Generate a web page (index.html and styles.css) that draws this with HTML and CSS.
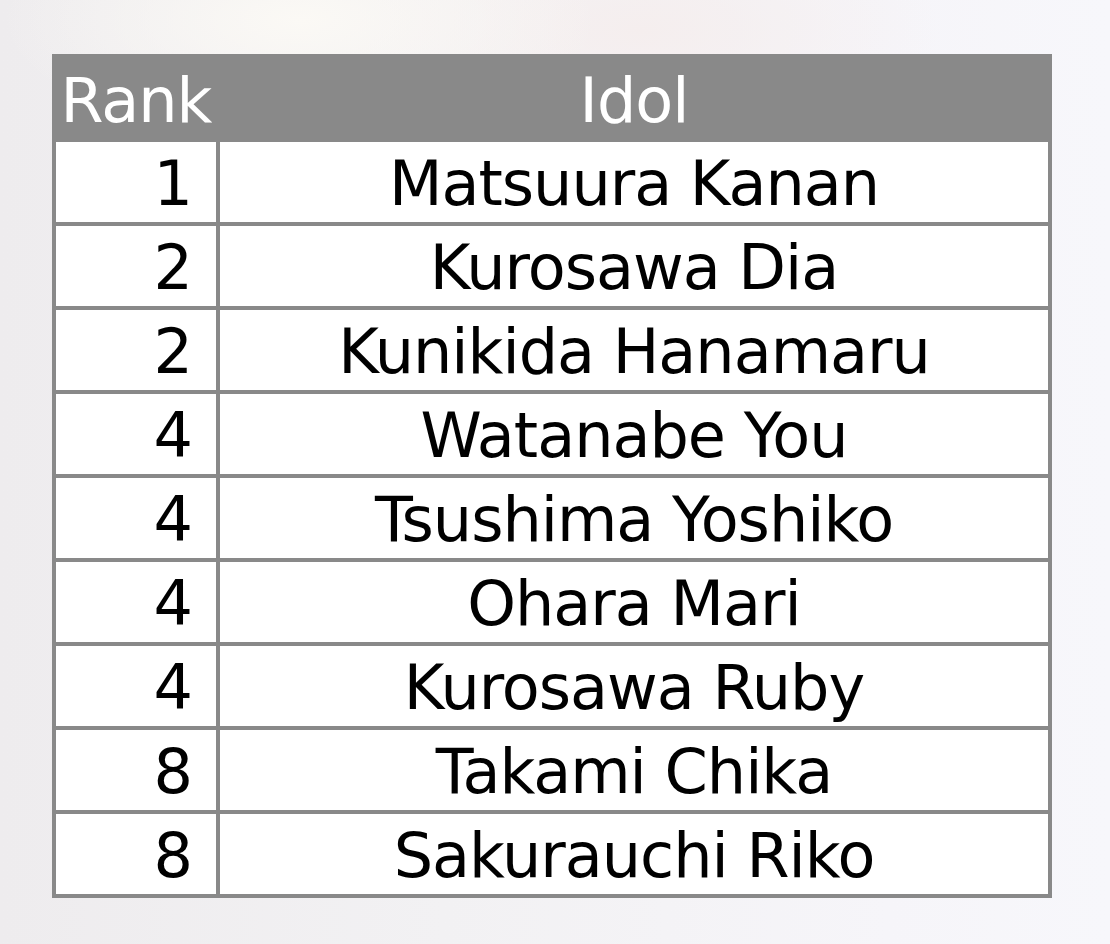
FILE: index.html
```html
<!DOCTYPE html>
<html>
<head>
<meta charset="utf-8">
<link rel="stylesheet" href="styles.css">
</head>
<body>
<div class="page">
<table class="rank-table">
<colgroup><col class="col-rank"><col class="col-idol"></colgroup>
<thead>
<tr><th class="rank-h">Rank</th><th class="idol-h">Idol</th></tr>
</thead>
<tbody>
<tr><td class="rank">1</td><td class="idol">Matsuura Kanan</td></tr>
<tr><td class="rank">2</td><td class="idol">Kurosawa Dia</td></tr>
<tr><td class="rank">2</td><td class="idol">Kunikida Hanamaru</td></tr>
<tr><td class="rank">4</td><td class="idol">Watanabe You</td></tr>
<tr><td class="rank">4</td><td class="idol">Tsushima Yoshiko</td></tr>
<tr><td class="rank">4</td><td class="idol">Ohara Mari</td></tr>
<tr><td class="rank">4</td><td class="idol">Kurosawa Ruby</td></tr>
<tr><td class="rank">8</td><td class="idol">Takami Chika</td></tr>
<tr><td class="rank">8</td><td class="idol">Sakurauchi Riko</td></tr>
</tbody>
</table>
</div>
</body>
</html>
```
FILE: styles.css
```css
html, body {
  margin: 0;
  padding: 0;
}
body {
  width: 1110px;
  height: 944px;
  overflow: hidden;
  background:
    radial-gradient(ellipse 300px 120px at 300px 20px, #fbf9f5 0%, rgba(251,249,245,0) 100%),
    radial-gradient(ellipse 300px 120px at 640px 30px, #f5eeee 0%, rgba(245,238,238,0) 100%),
    linear-gradient(90deg, #eeecee 0%, #f2f1f3 40%, #f6f5f9 80%, #f7f7fb 100%);
  font-family: "DejaVu Sans", Verdana, sans-serif;
}
.page {
  padding: 54px 0 0 52px;
}
.rank-table {
  table-layout: fixed;
  border-collapse: separate;
  border-spacing: 4px;
  width: 1000px;
  background: #898989;
  font-size: 62px;
  letter-spacing: -1px;
}
.col-rank {
  width: 160px;
}
.col-idol {
  width: 828px;
}
.rank-table th,
.rank-table td {
  padding: 0;
  height: 80px;
  line-height: 1;
  box-sizing: border-box;
}
.rank-table th {
  background: #898989;
  color: #fff;
  font-weight: normal;
  text-align: center;
  padding-top: 6px;
}
.rank-table td {
  background: #fff;
  color: #000;
  padding-top: 3px;
}
.rank-table .rank {
  text-align: right;
  padding-right: 24px;
}
.rank-table .idol {
  text-align: center;
}
```
